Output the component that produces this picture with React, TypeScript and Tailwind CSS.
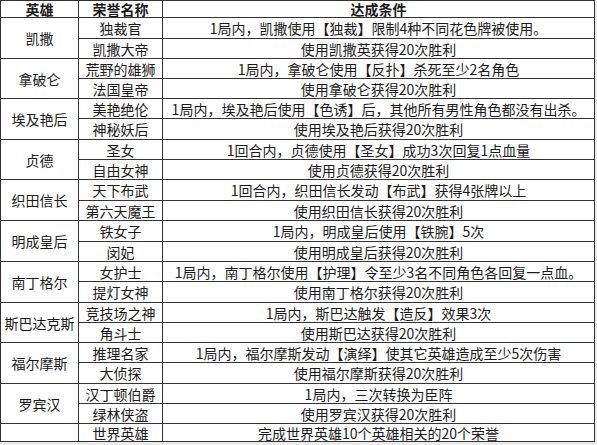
import { Fragment } from "react";

type Honor = { name: string; cond: string };
type Hero = { hero: string; honors: Honor[] };

const heroes: Hero[] = [
  {
    hero: "凯撒",
    honors: [
      { name: "独裁官", cond: "1局内，凯撒使用【独裁】限制4种不同花色牌被使用。" },
      { name: "凯撒大帝", cond: "使用凯撒英获得20次胜利" },
    ],
  },
  {
    hero: "拿破仑",
    honors: [
      { name: "荒野的雄狮", cond: "1局内，拿破仑使用【反扑】杀死至少2名角色" },
      { name: "法国皇帝", cond: "使用拿破仑获得20次胜利" },
    ],
  },
  {
    hero: "埃及艳后",
    honors: [
      { name: "美艳绝伦", cond: "1局内，埃及艳后使用【色诱】后，其他所有男性角色都没有出杀。" },
      { name: "神秘妖后", cond: "使用埃及艳后获得20次胜利" },
    ],
  },
  {
    hero: "贞德",
    honors: [
      { name: "圣女", cond: "1回合内，贞德使用【圣女】成功3次回复1点血量" },
      { name: "自由女神", cond: "使用贞德获得20次胜利" },
    ],
  },
  {
    hero: "织田信长",
    honors: [
      { name: "天下布武", cond: "1回合内，织田信长发动【布武】获得4张牌以上" },
      { name: "第六天魔王", cond: "使用织田信长获得20次胜利" },
    ],
  },
  {
    hero: "明成皇后",
    honors: [
      { name: "铁女子", cond: "1局内，明成皇后使用【铁腕】5次" },
      { name: "闵妃", cond: "使用明成皇后获得20次胜利" },
    ],
  },
  {
    hero: "南丁格尔",
    honors: [
      { name: "女护士", cond: "1局内，南丁格尔使用【护理】令至少3名不同角色各回复一点血。" },
      { name: "提灯女神", cond: "使用南丁格尔获得20次胜利" },
    ],
  },
  {
    hero: "斯巴达克斯",
    honors: [
      { name: "竞技场之神", cond: "1局内，斯巴达触发【造反】效果3次" },
      { name: "角斗士", cond: "使用斯巴达获得20次胜利" },
    ],
  },
  {
    hero: "福尔摩斯",
    honors: [
      { name: "推理名家", cond: "1局内，福尔摩斯发动【演绎】使其它英雄造成至少5次伤害" },
      { name: "大侦探", cond: "使用福尔摩斯获得20次胜利" },
    ],
  },
  {
    hero: "罗宾汉",
    honors: [
      { name: "汉丁顿伯爵", cond: "1局内，三次转换为臣阵" },
      { name: "绿林侠盗", cond: "使用罗宾汉获得20次胜利" },
    ],
  },
];

const cell = "flex items-center justify-center border-r border-b border-[#333] leading-none whitespace-nowrap";

export default function App() {
  return (
    <div
      className="w-[597px] h-[445px] bg-[#ebebeb] text-[14px] text-[#1a1a1a]"
      style={{ fontFamily: '"Noto Sans CJK SC", "Noto Sans", sans-serif' }}
    >
      <div className="grid w-[595px] bg-white border-l border-t border-[#333] grid-cols-[78px_84px_432px] grid-rows-[17px_21px_20px_20px_20px_20px_21px_20px_20px_21px_20px_21px_20px_20px_21px_20px_20px_20px_21px_20px_20px_18px]">
        <div className={cell + " font-bold"}>英雄</div>
        <div className={cell + " font-bold"}>荣誉名称</div>
        <div className={cell + " font-bold"}>达成条件</div>
        {heroes.map((h) => (
          <Fragment key={h.hero}>
            <div className={cell + " row-span-2"}>{h.hero}</div>
            <div className={cell}>{h.honors[0].name}</div>
            <div className={cell}>{h.honors[0].cond}</div>
            <div className={cell}>{h.honors[1].name}</div>
            <div className={cell}>{h.honors[1].cond}</div>
          </Fragment>
        ))}
        <div className={cell}></div>
        <div className={cell}>世界英雄</div>
        <div className={cell}>完成世界英雄10个英雄相关的20个荣誉</div>
      </div>
    </div>
  );
}
